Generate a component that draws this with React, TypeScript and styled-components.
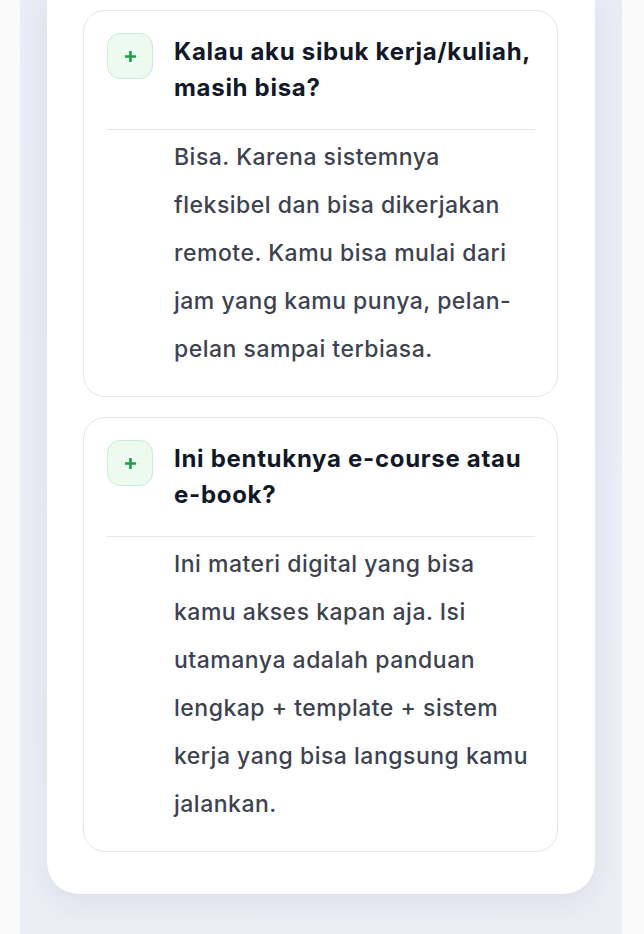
import React from "react";
import styled, { createGlobalStyle } from "styled-components";

const GlobalStyle = createGlobalStyle`
  html, body {
    margin: 0;
    padding: 0;
    background: #fafafb;
    font-family: Inter, "Noto Sans", "Liberation Sans", sans-serif;
    -webkit-font-smoothing: antialiased;
  }
`;

const Band = styled.div`
  margin: 0 22px 0 20px;
  padding: 0 27px 41px;
  background: linear-gradient(180deg, #e9ecf6 0%, #eceef5 100%);
  min-height: 934px;
  box-sizing: border-box;
`;

const Card = styled.section`
  background: #ffffff;
  border-radius: 0 0 32px 32px;
  padding: 10px 37px 42px 36px;
  box-shadow: 0 10px 30px rgba(30, 40, 80, 0.07);
`;

const FaqList = styled.div`
  display: flex;
  flex-direction: column;
  gap: 20px;
`;

const FaqItem = styled.div`
  border: 1px solid #e4e6ea;
  border-radius: 22px;
  padding: 22px 22px 23px 23px;
  background: #fff;
`;

const Header = styled.div`
  display: flex;
  align-items: flex-start;
  gap: 21px;
`;

const PlusBox = styled.div`
  flex: 0 0 auto;
  width: 44px;
  height: 44px;
  border-radius: 13px;
  border: 1px solid #c9edd2;
  background: #ecfaef;
  display: flex;
  align-items: center;
  justify-content: center;
`;

const Question = styled.h3`
  margin: 1px 0 0;
  font-size: 24px;
  line-height: 36px;
  font-weight: 700;
  color: #111827;
  letter-spacing: 0.7px;
`;

const Divider = styled.hr`
  border: 0;
  border-top: 1px solid #e7e8eb;
  margin: 23px 0 0;
`;

const Answer = styled.p`
  margin: 3px 0 0;
  padding-left: 67px;
  font-size: 23px;
  line-height: 48px;
  font-weight: 500;
  color: #3d4250;
  letter-spacing: 0.5px;
`;

const faqs = [
  {
    q: "Kalau aku sibuk kerja/kuliah, masih bisa?",
    a: "Bisa. Karena sistemnya fleksibel dan bisa dikerjakan remote. Kamu bisa mulai dari jam yang kamu punya, pelan-pelan sampai terbiasa.",
  },
  {
    q: "Ini bentuknya e-course atau e-book?",
    a: "Ini materi digital yang bisa kamu akses kapan aja. Isi utamanya adalah panduan lengkap + template + sistem kerja yang bisa langsung kamu jalankan.",
  },
];

const PlusIcon = () => (
  <svg width="13" height="13" viewBox="0 0 13 13">
    <path d="M6.5 1v11M1 6.5h11" stroke="#1f9d4a" strokeWidth="2.6" />
  </svg>
);

const App: React.FC = () => {
  return (
    <>
      <GlobalStyle />
      <Band>
        <Card>
          <FaqList>
            {faqs.map((f) => (
              <FaqItem key={f.q}>
                <Header>
                  <PlusBox>
                    <PlusIcon />
                  </PlusBox>
                  <Question>{f.q}</Question>
                </Header>
                <Divider />
                <Answer>{f.a}</Answer>
              </FaqItem>
            ))}
          </FaqList>
        </Card>
      </Band>
    </>
  );
};

export default App;
